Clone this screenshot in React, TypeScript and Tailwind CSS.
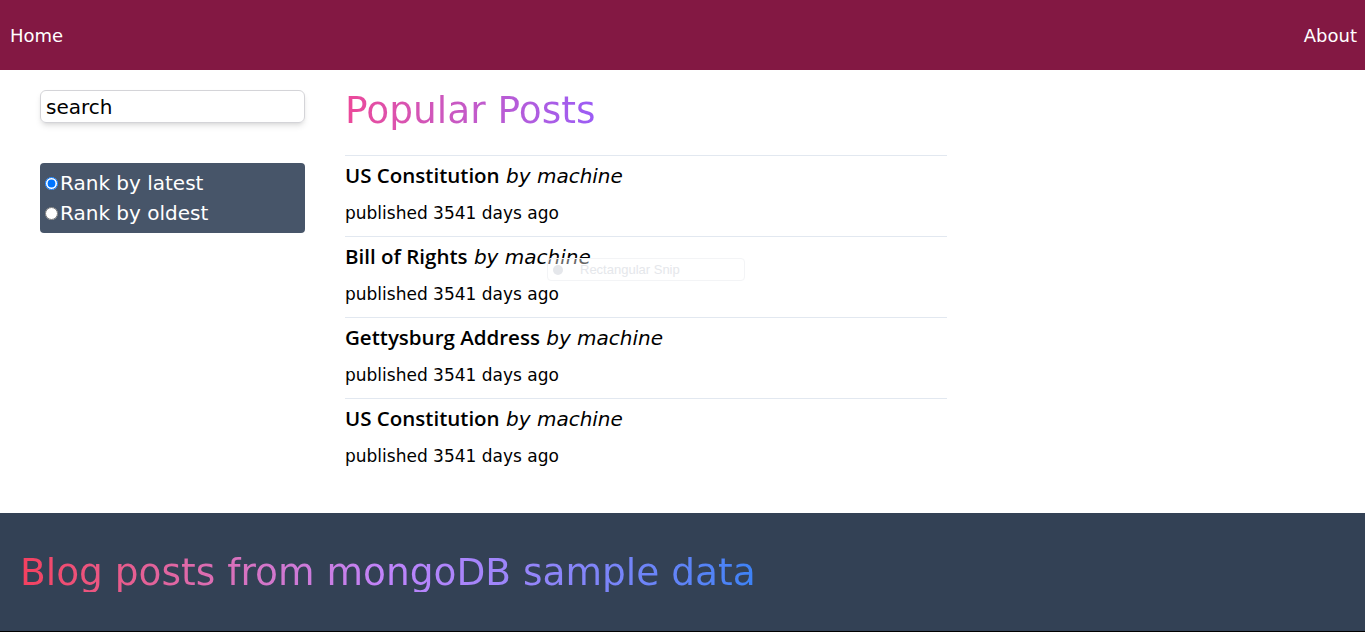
import React from "react";

const posts = [
  "US Constitution",
  "Bill of Rights",
  "Gettysburg Address",
  "US Constitution",
];

export default function App() {
  return (
    <div className="relative min-h-[632px] bg-white font-['DejaVu_Sans',sans-serif] text-black">
      <nav className="flex h-[70px] items-center justify-between bg-[#831843] pl-[10px] pr-[8px] pt-[1px] text-[18px] text-white">
        <a>Home</a>
        <a>About</a>
      </nav>
      <main className="flex h-[443px] pt-[20px]">
        <aside className="ml-[40px] w-[265px] shrink-0">
          <input
            readOnly
            value="search"
            className="h-[33px] w-full rounded-md border border-[#d4d4d8] px-[5px] text-[20px] shadow-md outline-none"
          />
          <div className="mt-[40px] flex h-[70px] flex-col rounded-sm bg-[#475569] px-[5px] pt-[5px] text-[20px] leading-[30px] text-white">
            <label className="flex items-center">
              <input type="radio" name="rank" defaultChecked className="m-0 mr-[2px] h-[13px] w-[13px]" />
              <span>Rank by latest</span>
            </label>
            <label className="flex items-center">
              <input type="radio" name="rank" className="m-0 mr-[2px] h-[13px] w-[13px]" />
              <span>Rank by oldest</span>
            </label>
          </div>
        </aside>
        <section className="ml-[40px] w-[602px]">
          <h1 className="mb-[25px] h-[40px] w-max bg-gradient-to-r from-[#ec4899] to-[#9b5cf6] bg-clip-text text-[37.5px] leading-[40px] text-transparent">
            Popular Posts
          </h1>
          {posts.map((t, i) => (
            <div key={i} className="border-t border-[#e2e8f0] pb-[9px] pt-[6px]">
              <div className="h-[28px] overflow-visible whitespace-nowrap text-[20px] leading-[28px]">
                <span className="font-['Open_Sans',sans-serif] text-[20.5px] font-semibold leading-[20px]">{t}</span>{" "}
                <span className="italic leading-[20px]">by machine</span>
              </div>
              <div className="mt-[9px] text-[17px] leading-[28px]">published 3541 days ago</div>
            </div>
          ))}
        </section>
      </main>
      <footer className="flex h-[119px] items-center border-b border-black bg-[#334155] px-[20px]">
        <h2 className="bg-gradient-to-r from-[#f43f5e] via-[#c084fc] to-[#3b82f6] bg-clip-text text-[37.5px] leading-[40px] text-transparent">
          Blog posts from mongoDB sample data
        </h2>
      </footer>
      <div className="pointer-events-none absolute left-[547px] top-[258px] flex h-[23px] w-[198px] items-center rounded-sm border border-[#f3f4f6] bg-white/40 font-['Liberation_Sans',sans-serif] text-[13px] text-[#e5e7eb]">
        <span className="mx-[5px] h-[10px] w-[10px] rounded-full bg-[#e5e7eb]" />
        <span className="ml-[12px]">Rectangular Snip</span>
      </div>
    </div>
  );
}
